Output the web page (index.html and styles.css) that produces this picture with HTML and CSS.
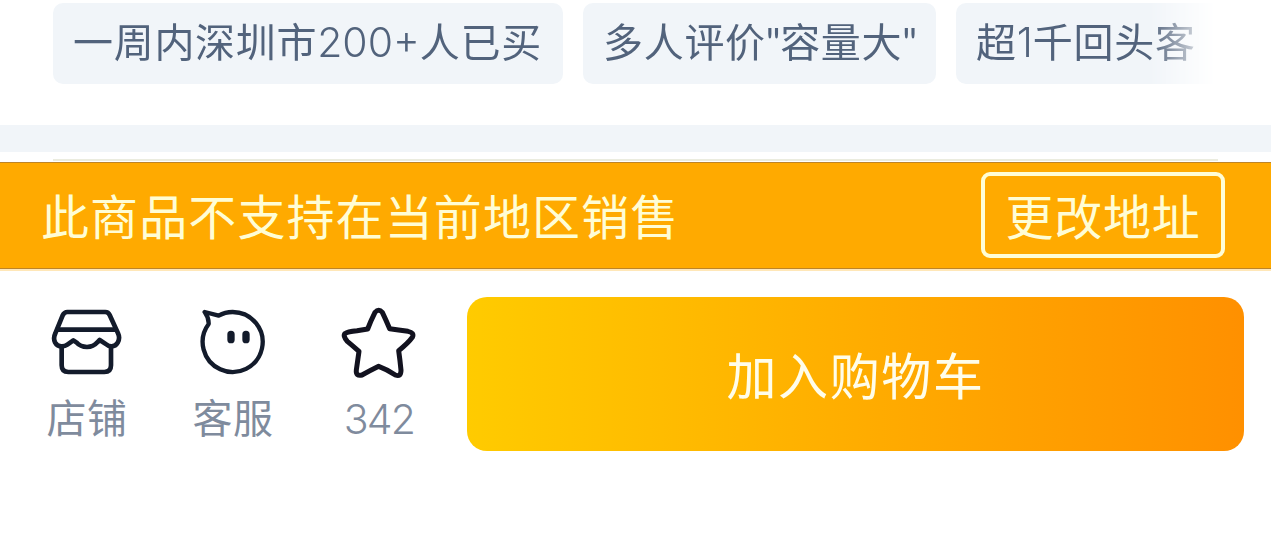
FILE: index.html
```html
<!DOCTYPE html>
<html lang="zh-CN">
<head>
    <meta charset="UTF-8">
    <meta name="viewport" content="width=device-width, initial-scale=1.0">
    <title>商品详情</title>
    <link rel="stylesheet" href="styles.css">
</head>
<body>

    <div class="tags">
        <span class="tag tag-bought">一周内深圳市<span class="num">200+</span>人已买</span>
        <span class="tag tag-review">多人评价<span class="quote">"</span>容量大<span class="quote">"</span></span>
        <span class="tag tag-repeat">超<span class="num one">1</span>千回头客</span>
    </div>

    <div class="divider"></div>
    <div class="line"></div>

    <div class="notice">
        <span class="notice-text">此商品不支持在当前地区销售</span>
        <button class="change-address">更改地址</button>
    </div>

    <div class="bottom-bar">
        <a class="item">
            <svg width="72" height="70" viewBox="63 51 216 210" fill="none" stroke="#131b2b" stroke-width="14" stroke-linejoin="round">
                <path d="M112 66H226Q235 66 239 75L264 130Q271 145 263 158Q257 169 245 169Q235 169 229 163L209 150L202 157Q190 171 171 171Q151 171 139 157L130 151L112 164Q104 170 93 169Q81 168 75 157Q69 144 76 130L98 76Q103 66 112 66Z"/>
                <path d="M80 119H258M95 168V226Q95 246 115 246H223Q243 246 243 226V168"/>
            </svg>
            <span class="label">店铺</span>
        </a>
        <a class="item">
            <svg width="72" height="70" viewBox="501 51 216 210" fill="none" stroke="#131b2b" stroke-width="13" stroke-linejoin="round">
                <path d="M524 66L566 77Q585 66 608 66A90 90 0 1 1 536 102Q537 84 524 66Z"/>
                <path d="M603 133V149M648 133V149" stroke-width="22" stroke-linecap="round"/>
            </svg>
            <span class="label">客服</span>
        </a>
        <a class="item">
            <svg class="star" width="80" height="70" viewBox="57 51 240 210" fill="none" stroke="#12121f" stroke-width="15" stroke-linejoin="round">
                <path d="M165 67Q176 55 187 67Q198 90 209 116Q235 120 264 124Q284 128 277 142Q264 160 236 182Q240 210 243 241Q243 262 226 255Q203 239 176 229Q150 242 126 255Q107 260 109 240L117 184Q99 168 82 154Q67 136 76 130Q82 125 111 122L143 117Q152 93 165 67Z"/>
            </svg>
            <span class="label count">342</span>
        </a>
        <button class="add-cart">加入购物车</button>
    </div>

</body>
</html>
```
FILE: styles.css
```css
* {
    box-sizing: border-box;
}
body {
    margin: 0;
    background-color: #fff;
    font-family: "Noto Sans CJK SC", sans-serif;
    font-weight: 400;
    overflow: hidden;
}
button {
    font: inherit;
    padding: 0;
}
.tags {
    display: flex;
    gap: 20px;
    height: 125px;
    padding: 3px 0 0 53px;
    -webkit-mask-image: linear-gradient(to right, #000 1150px, transparent 1215px);
    mask-image: linear-gradient(to right, #000 1150px, transparent 1215px);
}
.tag {
    height: 81px;
    padding-left: 20px;
    border-radius: 10px;
    background-color: #f1f5f9;
    color: #52637c;
    font-size: 40px;
    line-height: 75px;
    letter-spacing: 0.7px;
    white-space: nowrap;
    flex: none;
}
.tag-bought {
    width: 510px;
}
.tag-review {
    width: 353px;
}
.tag-repeat {
    width: 275px;
}
.num {
    font-family: Inter, sans-serif;
    font-weight: 350;
    font-size: 41px;
    letter-spacing: 0;
}
.quote {
    font-family: Lato, sans-serif;
    letter-spacing: -0.5px;
}
.divider {
    height: 27px;
    background-color: #f1f5f9;
}
.line {
    height: 3px;
    margin: 7px 53px 0;
    border-top: 2px solid #ebecdf;
}
.notice {
    display: flex;
    justify-content: space-between;
    align-items: flex-start;
    height: 107px;
    padding: 9px 46px 0 41px;
    background-color: #ffaa00;
    border-top: 1px solid #bd8428;
    border-bottom: 1px solid #bd8428;
    box-shadow: 0 2px 0 #ffe7b8;
    color: #fffdd5;
    font-size: 48px;
    letter-spacing: 1.1px;
}
.notice-text {
    line-height: 84px;
}
.change-address {
    width: 244px;
    height: 86px;
    padding-bottom: 2px;
    border: 4px solid #fffdd5;
    border-radius: 9px;
    background: none;
    color: inherit;
    line-height: 76px;
    letter-spacing: 0.8px;
}
.bottom-bar {
    display: flex;
    align-items: flex-start;
    padding: 28px 27px 0 14px;
}
.item {
    display: flex;
    flex-direction: column;
    align-items: center;
    width: 146px;
    padding-top: 10px;
}
.star {
    overflow: visible;
}
.label {
    margin-top: 9px;
    color: #7f8b9d;
    font-size: 40px;
    line-height: 60px;
    letter-spacing: 0.5px;
}
.count {
    margin-top: 12px;
    font-family: Inter, sans-serif;
    font-weight: 350;
    font-size: 41px;
    letter-spacing: -1.8px;
}
.add-cart {
    flex: 1;
    height: 154px;
    margin-left: 15px;
    padding-bottom: 2px;
    border: none;
    border-radius: 20px;
    background: linear-gradient(to right, #ffcb00, #ffaa00 55%, #ff9000);
    color: #fffdea;
    font-size: 50px;
    line-height: 150px;
    letter-spacing: 1.6px;
}
```
